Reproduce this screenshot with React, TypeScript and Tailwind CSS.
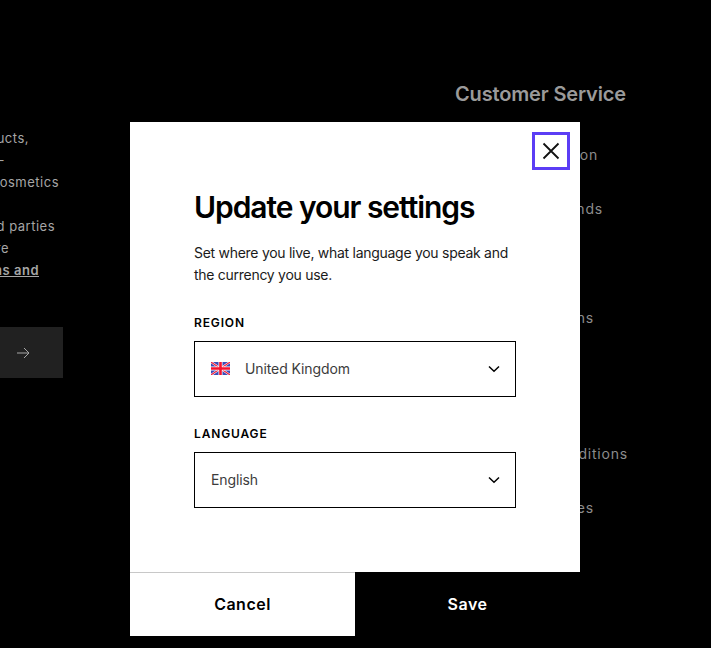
const leftLines = [
  { text: "products,", pr: "pr-[101px]", className: "mt-[127px]" },
  { text: "–", pr: "pr-[126px]", className: "" },
  { text: "cosmetics", pr: "pr-[71px]", className: "" },
  { text: "\u00a0", pr: "", className: "" },
  { text: "third parties", pr: "pr-[75px]", className: "" },
  { text: "are", pr: "pr-[121px]", className: "" },
];

const serviceLinks = [
  { label: "Delivery Information", className: "mt-[38px] w-[143px]" },
  { label: "Returns & Refunds", className: "mt-[32px] w-[148px]" },
  { label: "Order Tracking", className: "mt-[33px] w-[120px]" },
  { label: "Frequent Questions", className: "mt-[32px] w-[139px]" },
  { label: "Contact Us", className: "mt-[33px] w-[100px]" },
  { label: "Our Terms & Conditions", className: "mt-[59px] w-[173px]" },
  { label: "Cookies & Policies", className: "mt-[32px] w-[139px]" },
];

const UkFlag = () => (
  <svg width="19" height="13" viewBox="0 0 19 13" className="shrink-0">
    <rect width="19" height="13" fill="#3a4bb8" />
    <path d="M0 0L19 13M19 0L0 13" stroke="#fff" strokeWidth="2.2" />
    <path d="M0 0L19 13M19 0L0 13" stroke="#f01c38" strokeWidth="1.1" />
    <path d="M9.5 0V13M0 6.5H19" stroke="#fff" strokeWidth="4" />
    <path d="M9.5 0V13M0 6.5H19" stroke="#f5122e" strokeWidth="2.6" />
  </svg>
);

const Chevron = () => (
  <svg width="12" height="8" viewBox="0 0 12 8" fill="none" className="shrink-0">
    <path d="M1 1.5L6 6.2L11 1.5" stroke="#000" strokeWidth="1.5" />
  </svg>
);

const Field = ({ label, children }: { label: string; children: React.ReactNode }) => (
  <div>
    <div className="text-[12px] leading-[16px] font-semibold tracking-[0.85px] text-black uppercase">
      {label}
    </div>
    <div className="mt-[10px] flex h-[56px] items-center justify-between border border-black pr-[15px] pl-[16px]">
      <div className="flex items-center pb-[1px] text-[14px] tracking-[-0.1px] text-[#3c3c3c]">{children}</div>
      <Chevron />
    </div>
  </div>
);

export default function App() {
  return (
    <div className="relative h-[648px] w-[711px] overflow-hidden bg-black font-['Inter',sans-serif]">
      <div className="flex h-full">
        <div className="w-[130px] shrink-0 text-[13px] leading-[22px] tracking-[0.5px] text-[#a6a6a6]">
          {leftLines.map((line, index) => (
            <div key={index} className={`flex justify-end whitespace-nowrap ${line.pr} ${line.className}`}>
              {line.text}
            </div>
          ))}
          <div className="flex justify-end pr-[91px] font-semibold whitespace-nowrap">
            <span className="underline">terms and</span>
          </div>
          <div className="mt-[46px] ml-[-100px] flex h-[51px] w-[163px] items-center justify-end bg-[#212121] pr-[33px]">
            <svg width="14" height="12" viewBox="0 0 14 12" fill="none">
              <path d="M1 6H13M8 1L13 6L8 11" stroke="#a6a6a6" strokeWidth="1" />
            </svg>
          </div>
        </div>
        <div className="ml-[325px] pt-[82px] whitespace-nowrap text-[#8c8c8c]">
          <div className="text-[20px] leading-[24px] font-semibold tracking-[-0.15px] text-[#9a9a9a]">
            Customer Service
          </div>
          {serviceLinks.map((link) => (
            <div key={link.label} className={`flex justify-end text-[14px] leading-[22px] tracking-[0.8px] ${link.className}`}>
              {link.label}
            </div>
          ))}
        </div>
      </div>

      <div className="absolute top-[122px] left-[130px] flex h-[514px] w-[450px] flex-col bg-white">
        <div className="absolute top-[10px] right-[10px] flex h-[38px] w-[38px] items-center justify-center border-[3px] border-[#5b3df5]">
          <svg width="18" height="18" viewBox="0 0 18 18" fill="none">
            <path d="M1.5 1.5L16.5 16.5M16.5 1.5L1.5 16.5" stroke="#111" strokeWidth="1.8" />
          </svg>
        </div>
        <div className="flex-1 px-[64px] pt-[65px]">
          <h1 className="text-[30px] leading-[40px] font-semibold tracking-[-1.05px] text-black">
            Update your settings
          </h1>
          <p className="mt-[15px] text-[14px] leading-[22px] tracking-[-0.28px] whitespace-nowrap text-[#1a1a1a]">
            Set where you live, what language you speak and
            <br />
            the currency you use.
          </p>
          <div className="mt-[29px] flex flex-col gap-[29px]">
            <Field label="Region">
              <UkFlag />
              <span className="ml-[15px]">United Kingdom</span>
            </Field>
            <Field label="Language">
              <span>English</span>
            </Field>
          </div>
        </div>
        <div className="flex h-[64px] text-[16px] font-semibold tracking-[0.5px]">
          <button className="flex-1 border-t border-[#c8c8c8] bg-white pb-[1px] text-black">Cancel</button>
          <button className="flex-1 bg-black text-white">Save</button>
        </div>
      </div>
    </div>
  );
}
